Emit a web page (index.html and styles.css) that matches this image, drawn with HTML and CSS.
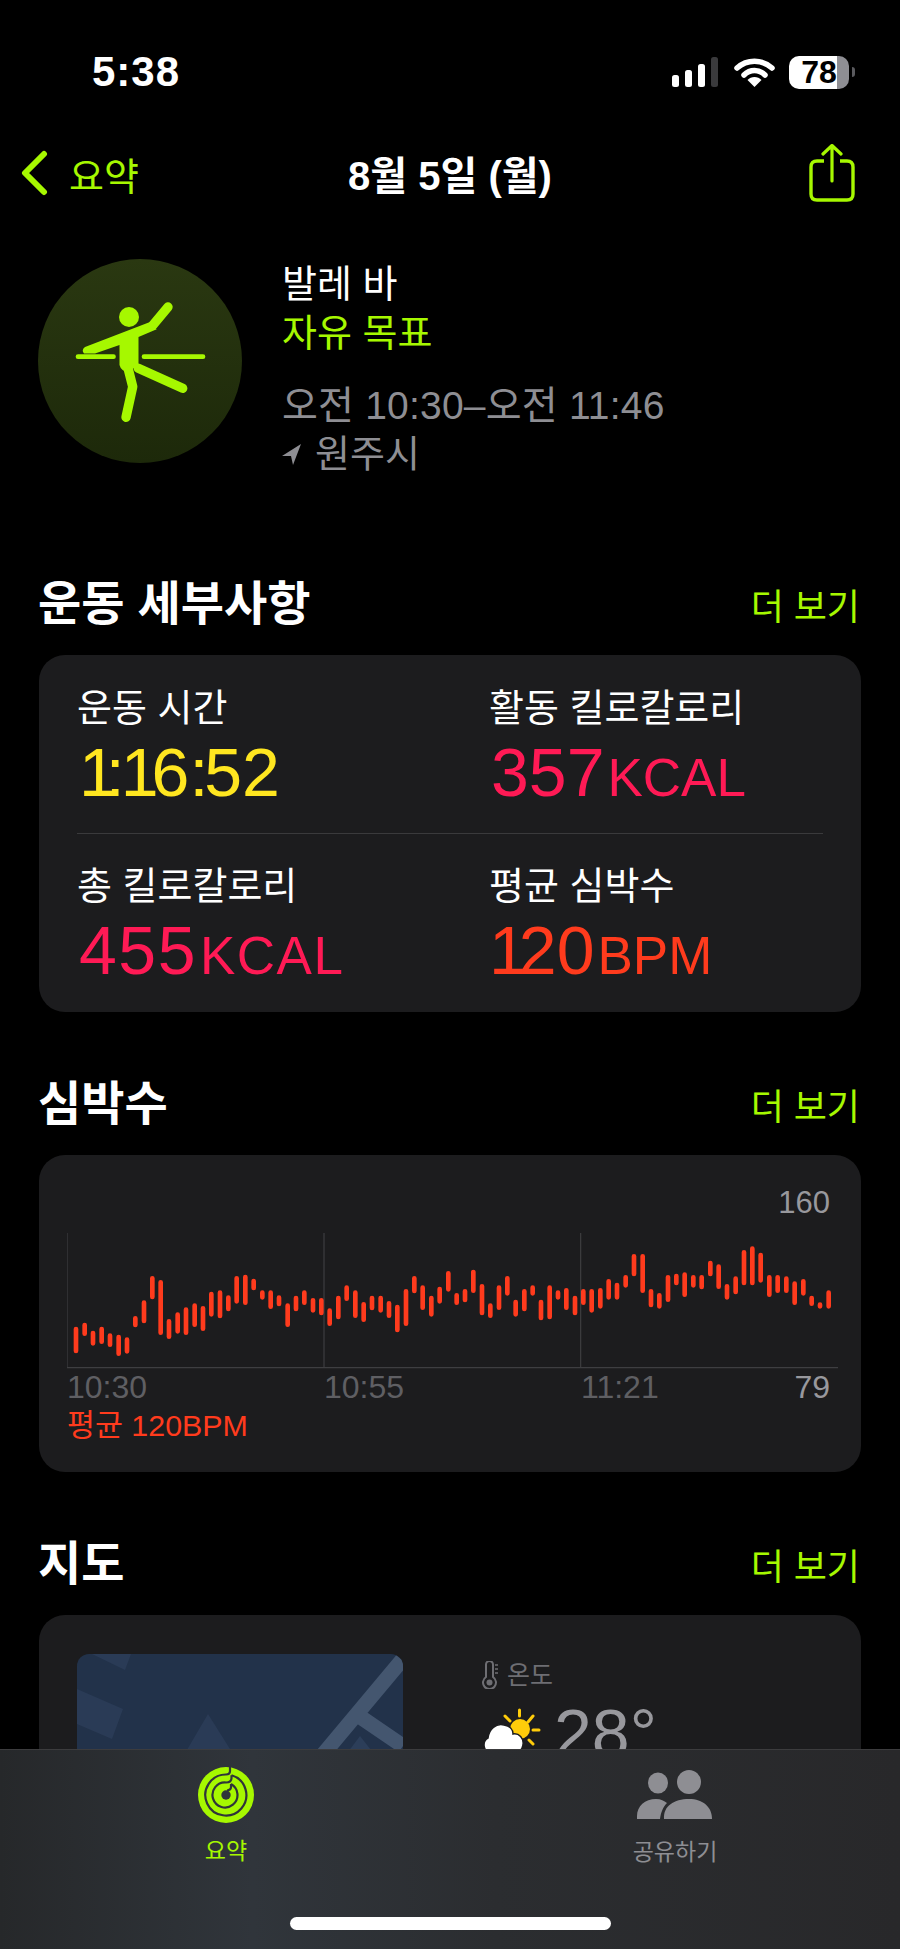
FILE: index.html
```html
<!DOCTYPE html>
<html lang="ko">
<head>
  <meta charset="UTF-8">
  <meta name="viewport" content="width=device-width, initial-scale=1.0">
  <link rel="stylesheet" href="styles.css">
  <title>운동 세부사항</title>
</head>
<body>
  <div class="status-bar">
    <span class="status-time">5:38</span>
    <div class="status-icons">
      <svg class="signal" width="46" height="30" viewBox="0 0 46 30">
        <rect x="0" y="18" width="7" height="12" rx="2.5" fill="#fff"/>
        <rect x="13" y="13" width="7" height="17" rx="2.5" fill="#fff"/>
        <rect x="26" y="7" width="7" height="23" rx="2.5" fill="#fff"/>
        <rect x="39" y="0" width="7" height="30" rx="2.5" fill="#3a3a3c"/>
      </svg>
      <svg class="wifi" width="41" height="29" viewBox="0 0 41 29">
        <path d="M3 10 C13 1 28 1 38 10" fill="none" stroke="#fff" stroke-width="5.5" stroke-linecap="round"/>
        <path d="M10 17 C16 11 25 11 31 17" fill="none" stroke="#fff" stroke-width="5.5" stroke-linecap="round"/>
        <path d="M20.5 29 L13.5 22 C17 18 24 18 27.5 22 Z" fill="#fff"/>
      </svg>
      <div class="battery">
        <div class="battery-body"><span class="battery-text">78</span></div>
        <div class="battery-tip"></div>
      </div>
    </div>
  </div>

  <div class="nav">
    <div class="nav-back">
      <svg width="28" height="46" viewBox="0 0 28 46">
        <path d="M24 4 L5 23 L24 42" fill="none" stroke="#a6f800" stroke-width="6" stroke-linecap="round" stroke-linejoin="round"/>
      </svg>
      <span>요약</span>
    </div>
    <div class="nav-title">8월 5일 (월)</div>
    <svg class="nav-share" width="46" height="58" viewBox="0 0 46 58">
      <path d="M15 17 H8 Q2 17 2 23 V50 Q2 56 8 56 H38 Q44 56 44 50 V23 Q44 17 38 17 H31" fill="none" stroke="#a6f800" stroke-width="3.4"/>
      <path d="M23 37 V2 M14 10 L23 1.5 L32 10" fill="none" stroke="#a6f800" stroke-width="3.2" stroke-linecap="round" stroke-linejoin="round"/>
    </svg>
  </div>

  <div class="hero">
    <svg class="hero-icon" width="204" height="204" viewBox="38 259 204 204">
      <defs>
        <linearGradient id="heroBg" x1="0" y1="0" x2="0" y2="1">
          <stop offset="0" stop-color="#2a3811"/>
          <stop offset="1" stop-color="#1d290a"/>
        </linearGradient>
      </defs>
      <circle cx="140" cy="361" r="102" fill="url(#heroBg)"/>
      <path d="M78 356.7 H113.5 M144 356.7 H203" fill="none" stroke="#a6f800" stroke-width="4.7" stroke-linecap="round"/>
      <path d="M150 322 L85 347 Q81 350 84 353.5 L95 353.5 L119.5 345 V365 Q121 371 128 372 L138.5 365 V337 L156.7 329.3 Z" fill="#a6f800"/>
      <g fill="none" stroke="#a6f800" stroke-linecap="round" stroke-linejoin="round" stroke-width="9.4">
        <path d="M153 325 L168 307"/>
        <path d="M128 368 L132.7 386.7 L126 417.3"/>
        <path d="M138.3 368.3 L182.7 388.3"/>
      </g>
      <ellipse cx="129" cy="317" rx="10" ry="10" fill="#a6f800"/>
    </svg>
    <div class="hero-text">
      <div class="hero-name">발레 바</div>
      <div class="hero-goal">자유 목표</div>
      <div class="hero-time">오전 10:30–오전 11:46</div>
      <div class="hero-place">
        <svg width="19" height="21" viewBox="0 0 19 21"><path d="M19 0 L0 12 L9 12 L11 21 Z" fill="#8e8e93"/></svg>
        <span>원주시</span>
      </div>
    </div>
  </div>

  <div class="section-head">
    <h2>운동 세부사항</h2>
    <span class="more">더 보기</span>
  </div>
  <div class="card details">
    <div class="detail-row">
      <div class="detail">
        <div class="detail-label">운동 시간</div>
        <div class="detail-value yellow"><span class="kern-first">1</span><span class="kern-colon">:</span><span class="kern-second">1</span>6<span class="kern-colon">:</span>52</div>
      </div>
      <div class="detail">
        <div class="detail-label">활동 킬로칼로리</div>
        <div class="detail-value pink">357<small>KCAL</small></div>
      </div>
    </div>
    <div class="divider"></div>
    <div class="detail-row">
      <div class="detail">
        <div class="detail-label">총 킬로칼로리</div>
        <div class="detail-value pink wide">455<small>KCAL</small></div>
      </div>
      <div class="detail">
        <div class="detail-label">평균 심박수</div>
        <div class="detail-value red"><span class="tight">1</span>20<small>BPM</small></div>
      </div>
    </div>
  </div>

  <div class="section-head">
    <h2>심박수</h2>
    <span class="more">더 보기</span>
  </div>
  <div class="card heart">
    <div class="chart-max">160</div>
    <svg class="chart" width="771" height="136" viewBox="81 99 2313 408">
      <path d="M81 99 V503 M852 99 V503 M1622 99 V503 M81 503 H2394" stroke="#3e3e41" stroke-width="3.5" fill="none"/>
      <path fill="none" stroke="#ff3b1d" stroke-width="14" stroke-linecap="round" d="M108 387V453M134 375V401M159 399V430M185 387V425M210 407V434M236 411V461M261 419V454M286 355V375M312 308V363M337 235V291M362 247V398M387 364V410M413 344V394M438 329V398M464 317V374M489 325V386M514 282V343M540 278V348M565 293V327M590 235V304M616 231V308M641 243V264M667 278V292M692 278V320M717 293V312M743 317V374M768 294V327M793 278V308M819 301V331M844 301V339M869 332V371M895 294V351M920 263V296M946 278V347M971 313V359M996 294V324M1022 294V331M1047 310V347M1072 321V390M1098 274V371M1123 235V273M1148 263V323M1174 294V343M1199 267V304M1225 220V268M1250 286V308M1275 274V300M1300 216V272M1326 259V339M1351 317V347M1377 263V323M1402 235V280M1427 306V343M1453 274V327M1478 263V280M1503 306V354M1529 263V351M1554 278V292M1579 271V323M1605 294V339M1630 274V308M1655 274V331M1681 271V319M1706 244V292M1731 255V292M1757 232V256M1782 169V222M1808 169V272M1833 274V315M1858 286V319M1884 232V299M1909 228V249M1934 224V284M1960 232V256M1985 232V261M2011 189V222M2036 200V260M2061 259V292M2087 236V276M2112 157V249M2137 146V249M2162 165V241M2188 232V284M2213 232V272M2239 236V272M2264 251V308M2290 244V280M2315 294V311M2340 314V319M2366 278V319"/>
    </svg>
    <div class="chart-axis">
      <span class="axis-label">10:30</span>
      <span class="axis-label">10:55</span>
      <span class="axis-label">11:21</span>
      <span class="axis-end">79</span>
    </div>
    <div class="chart-avg">평균 120BPM</div>
  </div>

  <div class="section-head">
    <h2>지도</h2>
    <span class="more">더 보기</span>
  </div>
  <div class="card map-card">
    <svg class="map" width="326" height="260" viewBox="0 0 326 260">
      <rect width="326" height="260" fill="#22324a"/>
      <path d="M15 0 L54 0 L48 16 Z M0 35 L46 55 L35 85 L0 70 Z M131 60 L90 130 L175 130 Z" fill="#2a3b56"/>
      <path d="M325 6 L238 110 M279 60 L326 92" stroke="#44566f" stroke-width="15" fill="none"/>
      <path d="M283 82 L262 110 L305 110 Z" fill="#2c3e59"/>
    </svg>
    <div class="weather">
      <div class="weather-label">
        <svg width="16" height="28" viewBox="0 0 16 28">
          <path d="M4 3.5 a3.5 3.5 0 0 1 7 0 V16 a6.5 6.5 0 1 1 -7 0 Z" fill="none" stroke="#6e6e73" stroke-width="2"/>
          <circle cx="7.5" cy="21.5" r="3" fill="#6e6e73"/>
          <path d="M13 4 H16 M13 8 H16 M13 12 H16" stroke="#6e6e73" stroke-width="1.4"/>
        </svg>
        <span>온도</span>
      </div>
      <div class="weather-now">
        <svg class="weather-icon" width="60" height="46" viewBox="0 0 60 46">
          <circle cx="38" cy="23" r="10" fill="#ffcc0a"/>
          <g stroke="#ffcc0a" stroke-width="3" stroke-linecap="round">
            <path d="M37.5 4 V10 M23 10 L28 15 M51 10 L46 16 M51 24 H57 M47 34 L51 38"/>
          </g>
          <path d="M8 46 C1 46 0 35 6 32 C7 23 14 17 22 19 C28 20 31 24 31 28 C37 27 42 32 41 39 C40 44 38 46 34 46 Z" fill="#fff" stroke="#1c1c1e" stroke-width="1.5"/>
        </svg>
        <span class="weather-temp">28°</span>
      </div>
    </div>
  </div>

  <div class="tabbar">
    <div class="tab tab-active">
      <svg width="56" height="56" viewBox="0 0 56 56">
        <circle cx="28" cy="28" r="28" fill="#a6f800"/>
        <g fill="none" stroke="#2f343a" stroke-width="2.2">
          <path d="M32 0 V4 Q32 7.5 28 7.5 A20.5 20.5 0 1 0 33.5 8.3"/>
          <path d="M33.5 8.3 V11 Q33.5 15.5 28 15.5 A12.5 12.5 0 1 0 33 17"/>
          <path d="M33 17 V20 Q33 23 29 23.5"/>
        </g>
        <circle cx="28" cy="28" r="4.7" fill="#2f343a"/>
      </svg>
      <span>요약</span>
    </div>
    <div class="tab tab-share">
      <svg width="76" height="50" viewBox="0 0 76 50">
        <ellipse cx="21" cy="13" rx="10" ry="10.5" fill="#8e8e93"/>
        <ellipse cx="52" cy="12" rx="12" ry="12" fill="#8e8e93"/>
        <path d="M0 49 V46 C0 36 8 29 19 29 C24 29 27 31 30 33 C26 37 24 42 23 49 Z" fill="#8e8e93"/>
        <path d="M27 49 C26 36 37 29 52 29 C66 29 75 37 75 49 Z" fill="#8e8e93"/>
      </svg>
      <span>공유하기</span>
    </div>
    <div class="home-indicator"></div>
  </div>
</body>
</html>
```

FILE: styles.css
```css
* {
  box-sizing: border-box;
}
html, body {
  margin: 0;
  height: 1949px;
  overflow: hidden;
}
body {
  position: relative;
  background-color: #000;
  color: #fff;
  font-family: "Liberation Sans", "Noto Sans CJK KR", sans-serif;
  padding: 50px 39px 0 39px;
}
svg {
  display: block;
  flex: none;
}

/* status bar */
.status-bar {
  display: flex;
  justify-content: space-between;
  align-items: center;
  height: 44px;
  padding-left: 53px;
}
.status-time {
  font-size: 42px;
  font-weight: 700;
  letter-spacing: 1px;
}
.status-icons {
  display: flex;
  align-items: center;
  margin-right: 6px;
}
.wifi {
  margin-left: 16px;
}
.battery {
  display: flex;
  align-items: center;
  margin-left: 14px;
}
.battery-body {
  width: 60px;
  height: 33px;
  border-radius: 10px;
  background: linear-gradient(to right, #fff 48px, #8e8e93 48px);
  display: flex;
  align-items: center;
  justify-content: center;
}
.battery-text {
  color: #000;
  font-size: 32px;
  font-weight: 700;
}
.battery-tip {
  width: 3px;
  height: 10px;
  margin-left: 3px;
  border-radius: 0 4px 4px 0;
  background-color: #5a5a5e;
}

/* nav */
.nav {
  display: flex;
  align-items: center;
  justify-content: space-between;
  position: relative;
  height: 62px;
  margin-top: 48px;
  margin-left: -39px;
  margin-right: 6px;
  padding-left: 20px;
}
.nav-back {
  display: flex;
  align-items: center;
  gap: 21px;
  color: #a6f800;
  font-size: 38px;
}
.nav-title {
  position: absolute;
  left: 0;
  right: -45px;
  text-align: center;
  font-size: 40px;
  font-weight: 700;
}

/* hero */
.hero {
  display: flex;
  gap: 40px;
  height: 220px;
  margin-top: 55px;
  margin-bottom: 94px;
  margin-left: -1px;
}
.hero-text {
  padding-top: 1px;
  font-size: 38px;
  line-height: 49px;
}
.hero-goal {
  color: #a6f800;
}
.hero-time {
  margin-top: 23px;
  color: #8e8e93;
  font-size: 39px;
  letter-spacing: 0.2px;
}
.hero-place {
  display: flex;
  align-items: center;
  gap: 14px;
  color: #8e8e93;
}

/* sections */
.section-head {
  display: flex;
  justify-content: space-between;
  align-items: baseline;
  height: 56px;
  margin-bottom: 26px;
  padding-top: 3px;
  padding-right: 1px;
}
.section-head h2 {
  margin: 0 0 0 -1px;
  font-size: 47px;
  line-height: 56px;
  font-weight: 700;
}
.more {
  color: #a6f800;
  font-size: 36px;
}
.card {
  background-color: #1c1c1e;
  border-radius: 26px;
  margin-bottom: 61px;
}

/* workout details */
.details {
  padding: 30px 38px 26px 38px;
}
.detail-row {
  display: grid;
  grid-template-columns: 412px 1fr;
}
.detail-label {
  font-size: 38px;
  line-height: 46px;
}
.detail-value {
  font-size: 68px;
  line-height: 72px;
  margin-top: 5px;
  padding-left: 2px;
}
.detail-value small {
  font-size: 53px;
  line-height: 1;
  margin-left: 3px;
}
.kern-first {
  letter-spacing: -11px;
}
.kern-second {
  letter-spacing: -7px;
}
.kern-colon {
  letter-spacing: -4px;
}
.tight {
  letter-spacing: -8px;
}
.wide {
  letter-spacing: 1.5px;
}
.yellow {
  color: #ffe620;
}
.pink {
  color: #ff1a55;
}
.red {
  color: #ff3b1d;
  padding-left: 0;
}
.divider {
  height: 1px;
  background-color: #3a3a3c;
  margin: 25px 0 29px;
}

/* heart rate */
.heart {
  height: 317px;
  padding: 32px 23px 0 28px;
}
.chart-max {
  font-size: 31px;
  line-height: 32px;
  color: #98989d;
  text-align: right;
  padding-right: 8px;
}
.chart {
  margin-top: 14px;
}
.chart-axis {
  display: grid;
  grid-template-columns: 257px 257px 1fr auto;
  height: 34px;
  margin-top: 1px;
  padding-right: 8px;
  font-size: 32px;
  line-height: 34px;
}
.axis-label {
  color: #5f5f63;
}
.axis-end {
  color: #98989d;
}
.chart-avg {
  margin-top: 4px;
  font-size: 30.4px;
  line-height: 34px;
  color: #ff3b1d;
}

/* map */
.map-card {
  display: flex;
  gap: 79px;
  height: 300px;
  padding: 39px 0 0 38px;
  margin-bottom: 0;
}
.map {
  border-radius: 12px;
}
.weather-label {
  display: flex;
  align-items: center;
  gap: 9px;
  height: 28px;
  margin-top: 7px;
  color: #6e6e73;
  font-size: 25px;
  line-height: 28px;
}
.weather-now {
  display: flex;
  align-items: flex-start;
  gap: 12px;
  margin-top: 8px;
  color: #98989d;
}
.weather-icon {
  margin-top: 9px;
}
.weather-temp {
  font-size: 68px;
  line-height: 72px;
}

/* tab bar */
.tabbar {
  position: absolute;
  left: 0;
  right: 0;
  top: 1749px;
  height: 200px;
  border-top: 1px solid #3c3c3e;
  background: linear-gradient(to right, #26282a 0, #30353b 28%, #2b2d30 55%, #28282a 100%);
}
.tab {
  position: absolute;
  top: 17px;
  width: 160px;
  display: flex;
  flex-direction: column;
  align-items: center;
  color: #8e8e93;
  font-size: 23px;
  gap: 9px;
}
.tab-active {
  left: 146px;
  color: #a6f800;
}
.tab-share {
  left: 595px;
  top: 20px;
  gap: 13px;
}
.home-indicator {
  position: absolute;
  left: 290px;
  top: 167px;
  width: 321px;
  height: 13px;
  border-radius: 7px;
  background-color: #fff;
}
```
